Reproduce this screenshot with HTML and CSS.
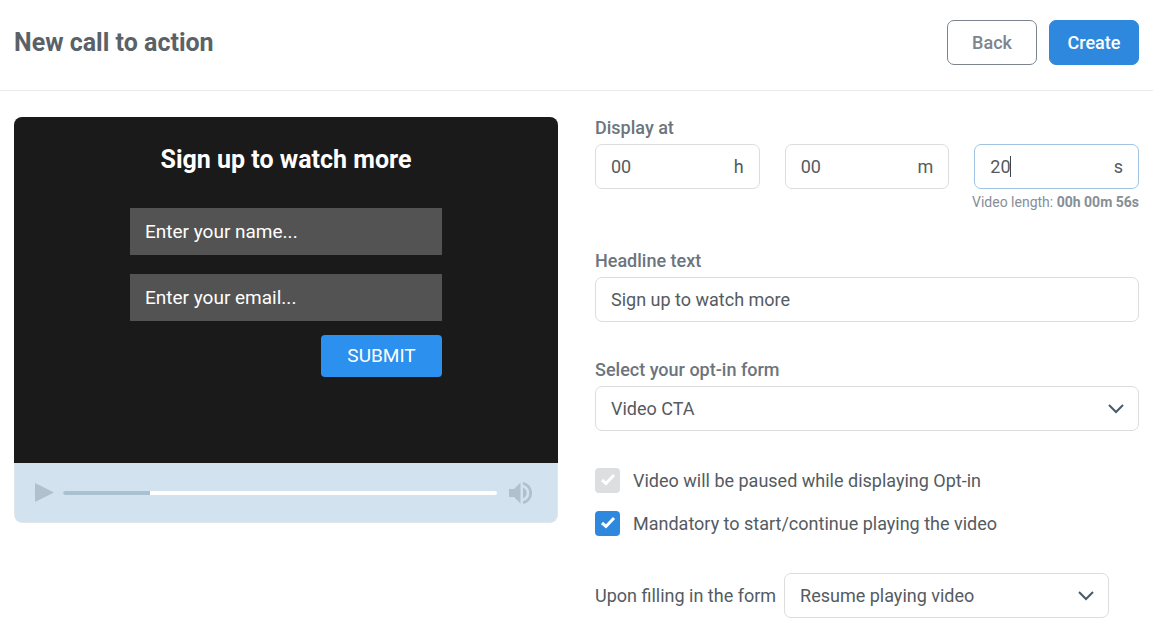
FILE: index.html
```html
<!DOCTYPE html>
<html lang="en">
  <head>
    <meta charset="UTF-8" />
    <meta name="viewport" content="width=device-width, initial-scale=1.0" />
    <title>New call to action</title>
    <link rel="stylesheet" href="styles.css">
  </head>
  <body>
    <header class="page-header">
      <h1>New call to action</h1>
      <div class="actions">
        <button type="button" class="btn btn-outline">Back</button>
        <button type="submit" form="cta-form" class="btn btn-primary">Create</button>
      </div>
    </header>

    <main class="content">
      <section class="preview">
        <div class="preview-screen">
          <h2>Sign up to watch more</h2>
          <div class="preview-form">
            <input type="text" placeholder="Enter your name..." aria-label="Name" />
            <input type="email" placeholder="Enter your email..." aria-label="Email" />
            <button type="button" class="preview-submit">SUBMIT</button>
          </div>
        </div>
        <div class="player-bar">
          <button type="button" class="player-btn" aria-label="Play">
            <svg width="20" height="20" viewBox="0 0 20 20"><path d="M0 0L19 9.500L0 19z" /></svg>
          </button>
          <div class="progress"><div class="progress-value" style="width: 20%"></div></div>
          <button type="button" class="player-btn" aria-label="Volume">
            <svg width="24" height="24" viewBox="0 0 24 24">
              <path d="M0 8v8h5l6.500 6.500v-21L5 8z" />
              <path d="M14 6.500v11a6 6 0 0 0 0-11z" />
              <path d="M14 1v2.800a8.500 8.500 0 0 1 0 16.400V23a11.200 11.200 0 0 0 0-22z" />
            </svg>
          </button>
        </div>
      </section>

      <form id="cta-form" class="settings">
        <div class="field">
          <label for="hours">Display at</label>
          <div class="time-row">
            <div class="time-input">
              <input type="text" id="hours" value="00" />
              <span>h</span>
            </div>
            <div class="time-input">
              <input type="text" id="minutes" value="00" aria-label="Minutes" />
              <span>m</span>
            </div>
            <div class="time-input active">
              <input type="text" id="seconds" value="20" aria-label="Seconds" />
              <span>s</span>
            </div>
          </div>
          <p class="hint">Video length: <strong>00h 00m 56s</strong></p>
        </div>

        <div class="field">
          <label for="headline">Headline text</label>
          <input type="text" id="headline" class="control" value="Sign up to watch more" />
        </div>

        <div class="field">
          <label for="optin">Select your opt-in form</label>
          <div class="select">
            <select id="optin" class="control">
              <option>Video CTA</option>
            </select>
            <svg width="16" height="10" viewBox="0 0 16 10"><path d="M1 1l7 7 7-7" /></svg>
          </div>
        </div>

        <div class="checks">
          <label class="check">
            <input type="checkbox" checked disabled />
            <svg width="25" height="25" viewBox="0 0 25 25"><path d="M7 12l4 3.500L19 7" /></svg>
            <span>Video will be paused while displaying Opt-in</span>
          </label>
          <label class="check">
            <input type="checkbox" checked />
            <svg width="25" height="25" viewBox="0 0 25 25"><path d="M7 12l4 3.500L19 7" /></svg>
            <span>Mandatory to start/continue playing the video</span>
          </label>
        </div>

        <div class="after-row">
          <label for="after">Upon filling in the form</label>
          <div class="select">
            <select id="after" class="control">
              <option>Resume playing video</option>
            </select>
            <svg width="16" height="10" viewBox="0 0 16 10"><path d="M1 1l7 7 7-7" /></svg>
          </div>
        </div>
      </form>
    </main>
  </body>
</html>
```
FILE: styles.css
```css
* {
  box-sizing: border-box;
}

body {
  margin: 0;
  font-family: Roboto, Arial, sans-serif;
  font-size: 18px;
  line-height: 22px;
  color: #545b62;
  background: #fff;
}

input,
select,
button {
  font: inherit;
  color: inherit;
}

.page-header {
  display: flex;
  align-items: center;
  justify-content: space-between;
  padding: 20px 14px 25px;
  border-bottom: 1px solid #e9ebec;
}

.page-header h1 {
  margin: 0;
  font-size: 25px;
  line-height: 30px;
  font-weight: 700;
  color: #5a6268;
}

.actions {
  display: flex;
  gap: 12px;
}

.btn {
  width: 90px;
  height: 45px;
  padding: 0;
  border: 1px solid #2e88dd;
  border-radius: 7px;
  font-weight: 500;
}

.btn-outline {
  background: #fff;
  border-color: #7c858d;
  color: #7c858d;
}

.btn-primary {
  background: #2e88dd;
  color: #fff;
}

.content {
  display: grid;
  grid-template-columns: repeat(2, minmax(0, 1fr));
  align-items: start;
  gap: 37px;
  padding: 26px 14px 14px;
}

/* Video preview */
.preview {
  border-radius: 8px;
  overflow: hidden;
}

.preview-screen {
  display: flex;
  flex-direction: column;
  align-items: center;
  padding: 28px 20px 86px;
  background: #1a1a1a;
  color: #fff;
}

.preview-screen h2 {
  margin: 0 0 33px;
  font-size: 25px;
  line-height: 30px;
  font-weight: 700;
}

.preview-form {
  display: flex;
  flex-direction: column;
  width: 100%;
  max-width: 312px;
  font-size: 19px;
}

.preview-form input {
  height: 47px;
  margin-bottom: 19px;
  padding: 0 15px;
  border: 0;
  background: #535353;
}

.preview-form input:nth-of-type(2) {
  margin-bottom: 14px;
}

.preview-form input::placeholder {
  color: #fff;
  opacity: 1;
}

.preview-submit {
  align-self: flex-end;
  width: 121px;
  height: 42px;
  padding: 0;
  border: 0;
  border-radius: 4px;
  background: #2c90ee;
}

.player-bar {
  display: flex;
  align-items: center;
  height: 60px;
  padding: 0 24px 0 20px;
  border: 1px solid #dfe6ec;
  border-top: 0;
  border-radius: 0 0 8px 8px;
  background: #d3e2ef;
}

.player-btn {
  display: flex;
  padding: 0;
  border: 0;
  background: none;
}

.player-btn svg {
  fill: #b0c0ce;
}

.progress {
  flex: 1;
  height: 4px;
  margin: 0 12px 0 8px;
  border-radius: 2px;
  background: #fff;
}

.progress-value {
  height: 4px;
  border-radius: 2px 0 0 2px;
  background: #a9c2d2;
}

/* Settings form */
.settings {
  display: flex;
  flex-direction: column;
  gap: 37px;
}

.field {
  display: flex;
  flex-direction: column;
  gap: 5px;
}

.field label {
  font-weight: 500;
  color: #6c757d;
}

.control,
.time-input {
  width: 100%;
  height: 45px;
  border: 1px solid #dcdddf;
  border-radius: 7px;
  background: #fff;
}

.control {
  padding: 0 15px;
}

.time-row {
  display: grid;
  grid-template-columns: repeat(3, minmax(0, 1fr));
  gap: 25px;
}

.time-input {
  display: flex;
  align-items: center;
  padding: 0 15px;
}

.time-input input {
  flex: 1;
  min-width: 0;
  height: 24px;
  padding: 0;
  border: 0;
  outline: 0;
  background: none;
}

.time-input.active {
  border-color: #a1c3e3;
}

.time-input.active input {
  background: linear-gradient(#3f464c, #3f464c) 20px center / 1px 21px no-repeat;
}

.hint {
  margin: -2px 0 1px;
  font-size: 14px;
  line-height: 20px;
  text-align: right;
  color: #868e96;
}

.hint strong {
  font-weight: 700;
}

.select {
  display: grid;
  align-items: center;
}

.select select,
.select svg {
  grid-area: 1 / 1;
}

.select select {
  appearance: none;
}

.select svg {
  justify-self: end;
  margin-right: 15px;
  fill: none;
  stroke: #495a68;
  stroke-width: 2;
  pointer-events: none;
}

.checks {
  display: flex;
  flex-direction: column;
  gap: 18px;
}

.check {
  display: grid;
  grid-template-columns: 25px 1fr;
  align-items: center;
  column-gap: 13px;
}

.check input,
.check svg {
  grid-area: 1 / 1;
}

.check input {
  appearance: none;
  width: 25px;
  height: 25px;
  margin: 0;
  border-radius: 4px;
  background: #2e88dd;
}

.check input:disabled {
  background: #dcdee0;
}

.check svg {
  fill: none;
  stroke: #fff;
  stroke-width: 3;
  pointer-events: none;
}

.after-row {
  display: flex;
  align-items: center;
  gap: 8px;
}

.after-row .select {
  flex: 0 1 325px;
}
```
